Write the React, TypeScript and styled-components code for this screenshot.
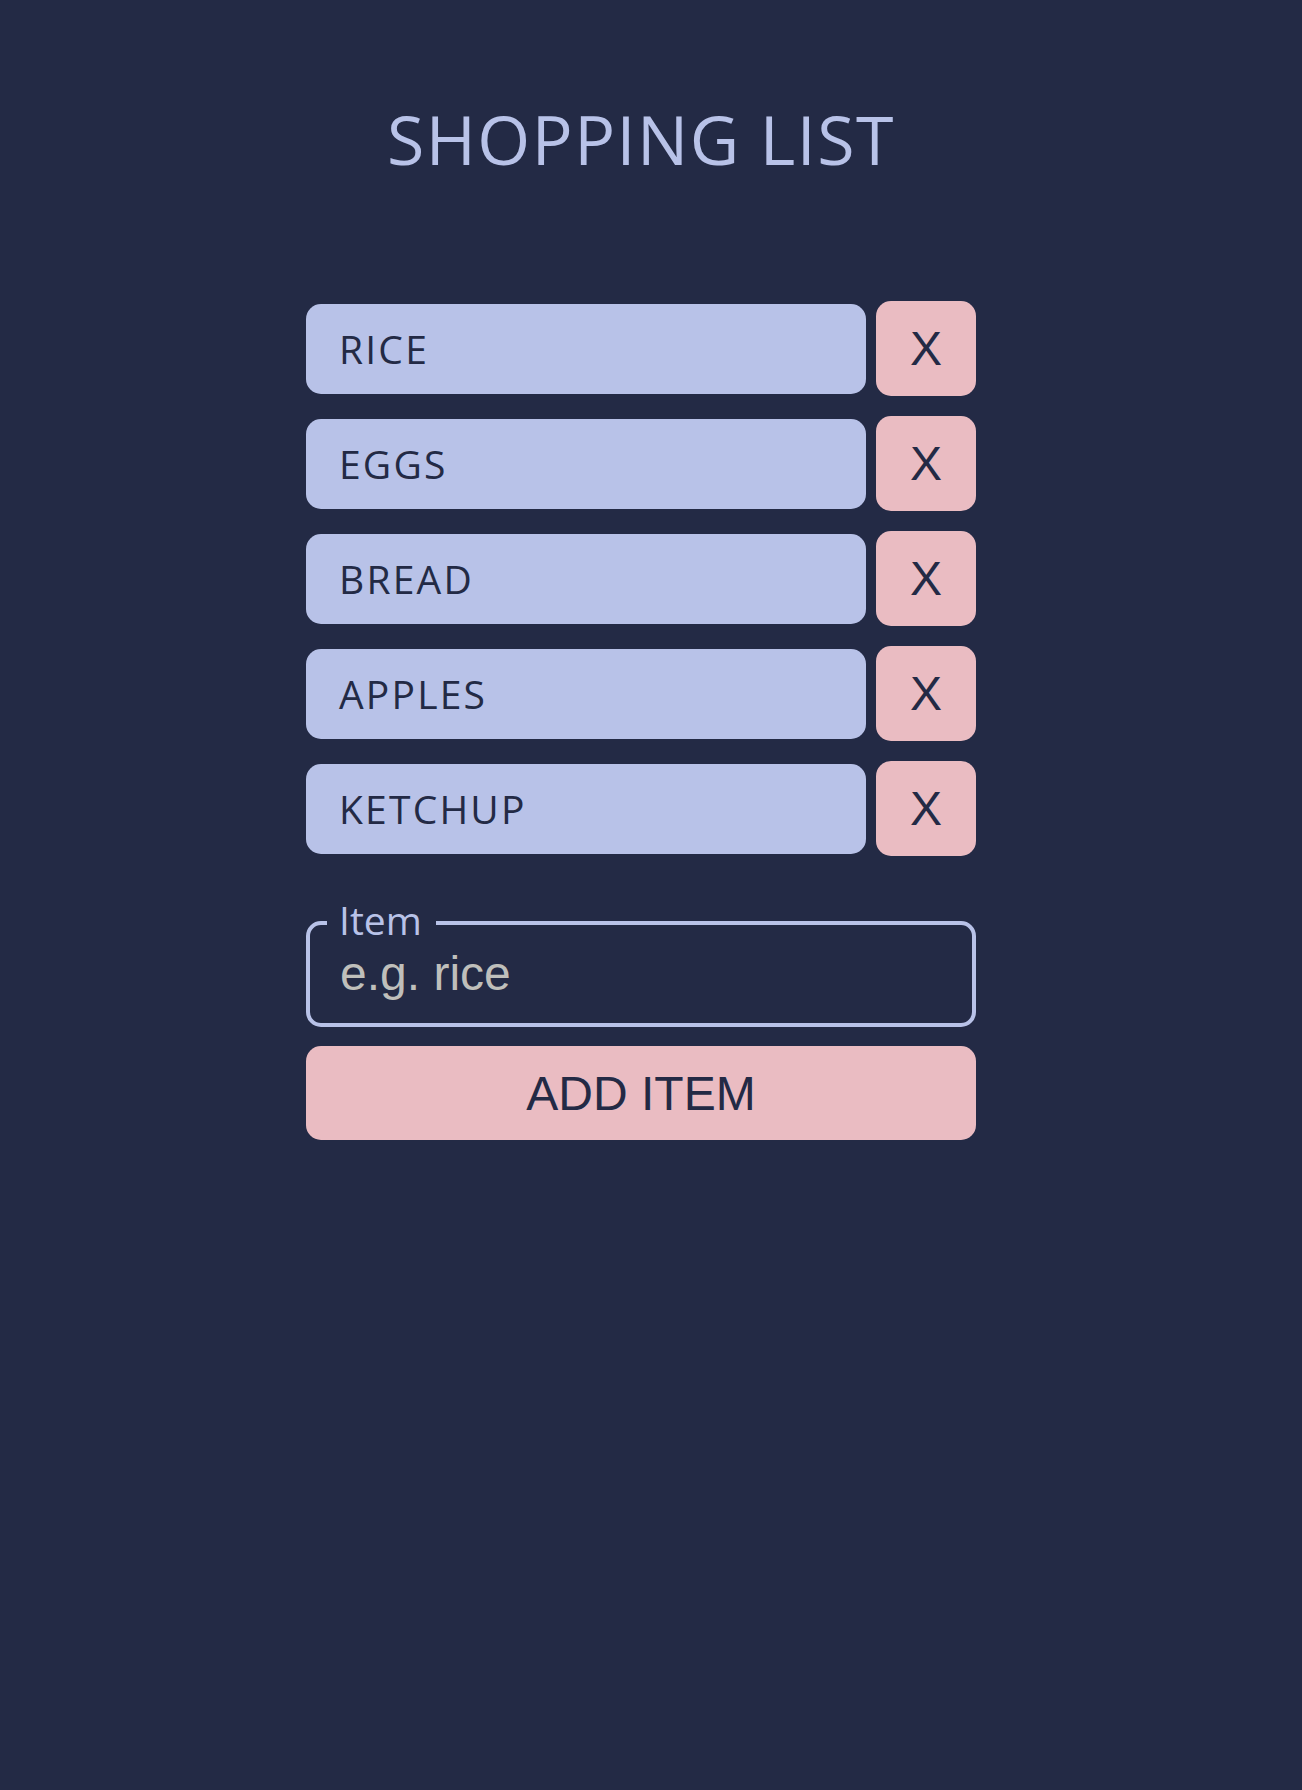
import React from "react";
import styled, { createGlobalStyle } from "styled-components";

const GlobalStyle = createGlobalStyle`
  html, body {
    margin: 0;
    padding: 0;
    background: #232a45;
  }
  body {
    min-height: 1790px;
    font-family: "Open Sans", "Liberation Sans", sans-serif;
  }
`;

const Page = styled.div`
  display: flex;
  flex-direction: column;
  align-items: center;
  padding: 105px 20px 0 0;
`;

const Title = styled.h1`
  margin: 0 0 128px;
  font-family: "Open Sans", sans-serif;
  font-weight: 400;
  font-size: 68px;
  line-height: 1;
  letter-spacing: 1.5px;
  color: #b8c2e8;
`;

const Panel = styled.div`
  width: 670px;
  display: flex;
  flex-direction: column;
`;

const List = styled.ul`
  list-style: none;
  margin: 0;
  padding: 0;
  display: flex;
  flex-direction: column;
  gap: 20px;
`;

const Row = styled.li`
  display: flex;
  align-items: center;
  gap: 10px;
  height: 95px;
`;

const ItemBox = styled.div`
  box-sizing: border-box;
  width: 560px;
  height: 90px;
  border-radius: 15px;
  background: #b8c2e8;
  color: #232a45;
  display: flex;
  align-items: center;
  padding-left: 33px;
  font-family: "Open Sans", sans-serif;
  font-size: 39px;
  letter-spacing: 2.2px;
`;

const RemoveButton = styled.button`
  width: 100px;
  height: 95px;
  border: none;
  border-radius: 15px;
  background: #eabcc2;
  color: #232a45;
  font-family: "Liberation Sans", Arial, sans-serif;
  font-size: 48px;
  padding: 0;
  display: flex;
  align-items: center;
  justify-content: center;
  cursor: pointer;
`;

const Field = styled.fieldset`
  margin: 44px 0 0;
  padding: 0 17px 22px;
  border: 4px solid #b8c2e8;
  border-radius: 15px;
`;

const Legend = styled.legend`
  padding: 0 14px 6px 12px;
  font-family: "Open Sans", sans-serif;
  font-size: 39px;
  line-height: 1;
  letter-spacing: 0;
  color: #b8c2e8;
`;

const Input = styled.input`
  box-sizing: border-box;
  display: block;
  width: 100%;
  margin-top: 1px;
  padding: 0 13px;
  border: none;
  outline: none;
  background: transparent;
  color: #d8d8d8;
  font-family: "Liberation Sans", Arial, sans-serif;
  font-size: 48px;
  line-height: normal;
  &::placeholder {
    color: #bfbfbb;
  }
`;

const AddButton = styled.button`
  margin-top: 19px;
  height: 94px;
  border: none;
  border-radius: 15px;
  background: #eabcc2;
  color: #232a45;
  font-family: "Liberation Sans", Arial, sans-serif;
  font-size: 48px;
  cursor: pointer;
`;

const items = ["RICE", "EGGS", "BREAD", "APPLES", "KETCHUP"];

export default function App() {
  return (
    <>
      <GlobalStyle />
      <Page>
        <Title>SHOPPING LIST</Title>
        <Panel>
          <List>
            {items.map((item) => (
              <Row key={item}>
                <ItemBox>{item}</ItemBox>
                <RemoveButton type="button">X</RemoveButton>
              </Row>
            ))}
          </List>
          <Field>
            <Legend>Item</Legend>
            <Input placeholder="e.g. rice" />
          </Field>
          <AddButton type="button">ADD ITEM</AddButton>
        </Panel>
      </Page>
    </>
  );
}
